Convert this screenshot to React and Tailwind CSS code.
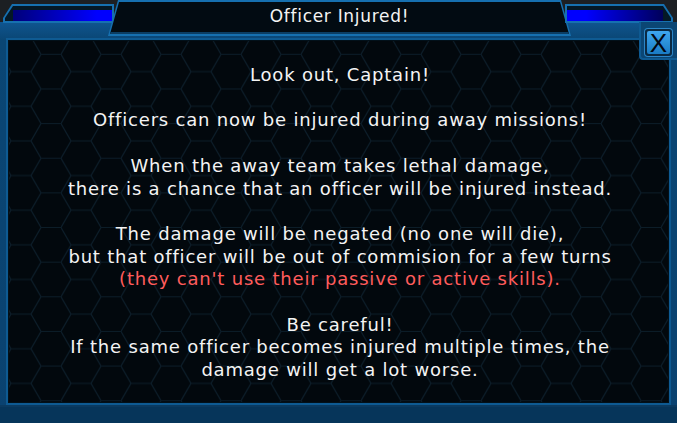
import React from "react";

const lines = [
    {text: "Look out, Captain!"},
    {text: ""},
    {text: "Officers can now be injured during away missions!"},
    {text: ""},
    {text: "When the away team takes lethal damage,"},
    {text: "there is a chance that an officer will be injured instead."},
    {text: ""},
    {text: "The damage will be negated (no one will die),"},
    {text: "but that officer will be out of commision for a few turns"},
    {text: "(they can't use their passive or active skills).", red: true},
    {text: ""},
    {text: "Be careful!"},
    {text: "If the same officer becomes injured multiple times, the"},
    {text: "damage will get a lot worse."},
];

function HexBackground() {
    return (
        <svg className="absolute inset-0 w-full h-full" aria-hidden="true">
            <defs>
                <pattern id="hex" width="60" height="34.64" patternUnits="userSpaceOnUse" x="-8" y="-4">
                    <path d="M0 17.32 L10 0 L30 0 L40 17.32 L30 34.64 L10 34.64 Z M40 17.32 L60 17.32"
                          fill="none" stroke="#0c1d29" strokeWidth="1.2"/>
                </pattern>
            </defs>
            <rect width="100%" height="100%" fill="#02080d"/>
            <rect width="100%" height="100%" fill="url(#hex)"/>
        </svg>
    );
}

function SideTab({side}) {
    const left = side === "left";
    return (
        <div className={left ? "w-[114px] pt-[4px] pl-[3px]" : "w-[112px] pt-[4px] pr-[4px]"}>
            <div
                className={`h-[19px] bg-[#1670b0] p-[2px] ${left
                    ? "[clip-path:polygon(9px_0,100%_0,100%_100%,0_100%,0_14px)]"
                    : "[clip-path:polygon(0_0,calc(100%-9px)_0,100%_14px,100%_100%,0_100%)]"}`}>
                <div
                    className={`h-full bg-[#041826] pt-[4px] ${left
                        ? "pl-[8px] [clip-path:polygon(8px_0,100%_0,100%_100%,0_100%,0_12px)]"
                        : "pr-[8px] [clip-path:polygon(0_0,calc(100%-8px)_0,100%_12px,100%_100%,0_100%)]"}`}>
                    <div
                        className={`h-full ${left
                            ? "bg-[linear-gradient(90deg,#00007a,#0000ff_85%)]"
                            : "bg-[linear-gradient(90deg,#0000ff_20%,#00005a)]"}`}/>
                </div>
            </div>
        </div>
    );
}

export default function App() {
    return (
        <div
            className="w-[677px] h-[423px] overflow-hidden flex flex-col font-['DejaVu_Sans',sans-serif] bg-[linear-gradient(180deg,#1c1f23_0px,#1c1f23_22px,#0f5590_22px,#0a4674_40px,#0a4270_100%)]">
            {/* header: side tabs and title plate */}
            <div className="h-[38px] flex shrink-0">
                <SideTab side="left"/>
                <div
                    className="flex-1 -mx-[6px] h-[36px] bg-[#1670b0] p-[2px] [clip-path:polygon(10px_0,calc(100%-10px)_0,100%_100%,0_100%)]">
                    <div
                        className="h-full bg-[#020b12] border-b-[2px] border-[#0b3d63] flex items-center justify-center [clip-path:polygon(9px_0,calc(100%-9px)_0,100%_100%,0_100%)]">
                        <span className="text-[17px] text-[#f4f4f4] tracking-[0.7px]">Officer Injured!</span>
                    </div>
                </div>
                <SideTab side="right"/>
            </div>

            {/* body */}
            <div className="flex-1 flex px-[6px] relative">
                <div className="flex-1 border-[2px] border-[#0e5a92] bg-[#021019] p-[1px] flex">
                    <div className="flex-1 relative overflow-hidden">
                        <HexBackground/>
                        <div className="relative pt-[23px] pl-[3px] flex flex-col items-center text-[18px] leading-[22.7px] tracking-[0.8px] text-[#f4f4f4]">
                            {lines.map((line, i) => (
                                <div key={i} className={line.red ? "text-[#ff5c5c]" : ""}>
                                    {line.text || "\u00a0"}
                                </div>
                            ))}
                        </div>
                    </div>
                </div>

                {/* close button sits in a notch over the panel corner */}
                <div
                    className="absolute top-[-16px] right-0 w-[38px] h-[38px] bg-[#0b4674] border-l-[2px] border-b-[2px] border-[#0e5a92] rounded-bl-[4px] flex items-start justify-end pr-[5px] pt-[7px]">
                    <div
                        className="w-[27px] h-[27px] rounded-[3px] bg-[#0a2a44] p-[2px] shadow-[0_0_0_1px_#2b86c8]">
                        <div
                            className="w-full h-full rounded-[2px] bg-[linear-gradient(180deg,#3ea6ee,#1a7cc4)] flex items-center justify-center text-[#020812] text-[26px] leading-none font-['Liberation_Sans',sans-serif]">
                            X
                        </div>
                    </div>
                </div>
            </div>

            {/* bottom band */}
            <div className="h-[18px] shrink-0 border-t-[2px] border-[#0b3a60] bg-[#06355a]"/>
        </div>
    );
}
